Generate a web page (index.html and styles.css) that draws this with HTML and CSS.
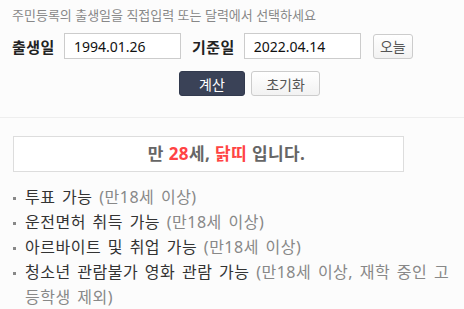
FILE: index.html
```html
<!DOCTYPE html>
<html lang="ko">
<head>
  <meta charset="UTF-8" />
  <meta name="viewport" content="width=device-width, initial-scale=1" />
  <title>만 나이 계산기</title>
  <link rel="stylesheet" href="styles.css">
</head>
<body>
  <form class="calc" onsubmit="return false;">
    <p class="hint">주민등록의 출생일을 직접입력 또는 달력에서 선택하세요</p>
    <div class="date-row">
      <label for="birth">출생일</label>
      <input type="text" id="birth" value="1994.01.26" />
      <label for="base">기준일</label>
      <input type="text" id="base" value="2022.04.14" />
      <button type="button" class="btn btn-today">오늘</button>
    </div>
    <div class="actions">
      <button type="button" class="btn btn-primary">계산</button>
      <button type="button" class="btn">초기화</button>
    </div>
  </form>

  <div class="result">
    <div class="result-box">만 <em>28</em>세, <em>닭띠</em> 입니다.</div>
    <ul class="notes">
      <li>투표 가능 <span>(만18세 이상)</span></li>
      <li>운전면허 취득 가능 <span>(만18세 이상)</span></li>
      <li>아르바이트 및 취업 가능 <span>(만18세 이상)</span></li>
      <li>청소년 관람불가 영화 관람 가능 <span>(만18세 이상, 재학 중인 고등학생 제외)</span></li>
    </ul>
  </div>
</body>
</html>
```

FILE: styles.css
```css
body {
  margin: 0;
  background: #fcfcfc;
  color: #333;
  font-family: "Noto Sans", "Noto Sans CJK KR", sans-serif;
}
.calc {
  padding: 4px 12px 0;
  border-bottom: 1px solid #eee;
  height: 118px;
  box-sizing: border-box;
}
.hint {
  margin: 0;
  font-size: 13px;
  line-height: 22px;
  color: #888;
}
.date-row {
  display: flex;
  align-items: center;
  margin-top: 7px;
}
.date-row label {
  font-size: 15px;
  font-weight: bold;
  letter-spacing: 0.5px;
  color: #222;
  margin-right: 9px;
}
.date-row input {
  width: 117px;
  height: 26px;
  box-sizing: border-box;
  padding: 0 9px;
  border: 1px solid #ccc;
  background: #fff;
  font-family: inherit;
  font-size: 14px;
  color: #111;
  margin-right: 11px;
}
.btn {
  height: 25px;
  padding: 0 12px;
  border: 1px solid #ccc;
  border-radius: 3px;
  background: linear-gradient(#fff, #f2f2f2);
  font-family: inherit;
  font-size: 14px;
  color: #555;
  cursor: pointer;
}
.btn-today {
  width: 40px;
  padding: 0;
  margin-left: 1px;
}
.actions {
  display: flex;
  justify-content: center;
  gap: 6px;
  margin-top: 12px;
  padding-left: 35px;
}
.btn-primary {
  width: 66px;
  border-color: #323a4e;
  background: #3a4257;
  color: #fff;
}
.actions .btn:last-child {
  width: 69px;
}
.result {
  padding: 18px 8px 0 13px;
}
.result-box {
  width: 391px;
  height: 36px;
  box-sizing: border-box;
  padding-left: 36px;
  border: 1px solid #ddd;
  background: #fff;
  text-align: center;
  font-size: 17px;
  font-weight: bold;
  letter-spacing: 0.4px;
  line-height: 34px;
  color: #666;
}
.result-box em {
  font-style: normal;
  color: #f44;
}
.notes {
  list-style: none;
  margin: 13px 0 0;
  padding: 0;
}
.notes li {
  position: relative;
  padding-left: 12px;
  font-size: 16px;
  letter-spacing: 0.5px;
  word-spacing: 2px;
  line-height: 25px;
  word-break: break-all;
}
.notes li::before {
  content: "";
  position: absolute;
  left: 0;
  top: 12px;
  width: 3px;
  height: 3px;
  background: #888;
}
.notes span {
  color: #888;
}
```
